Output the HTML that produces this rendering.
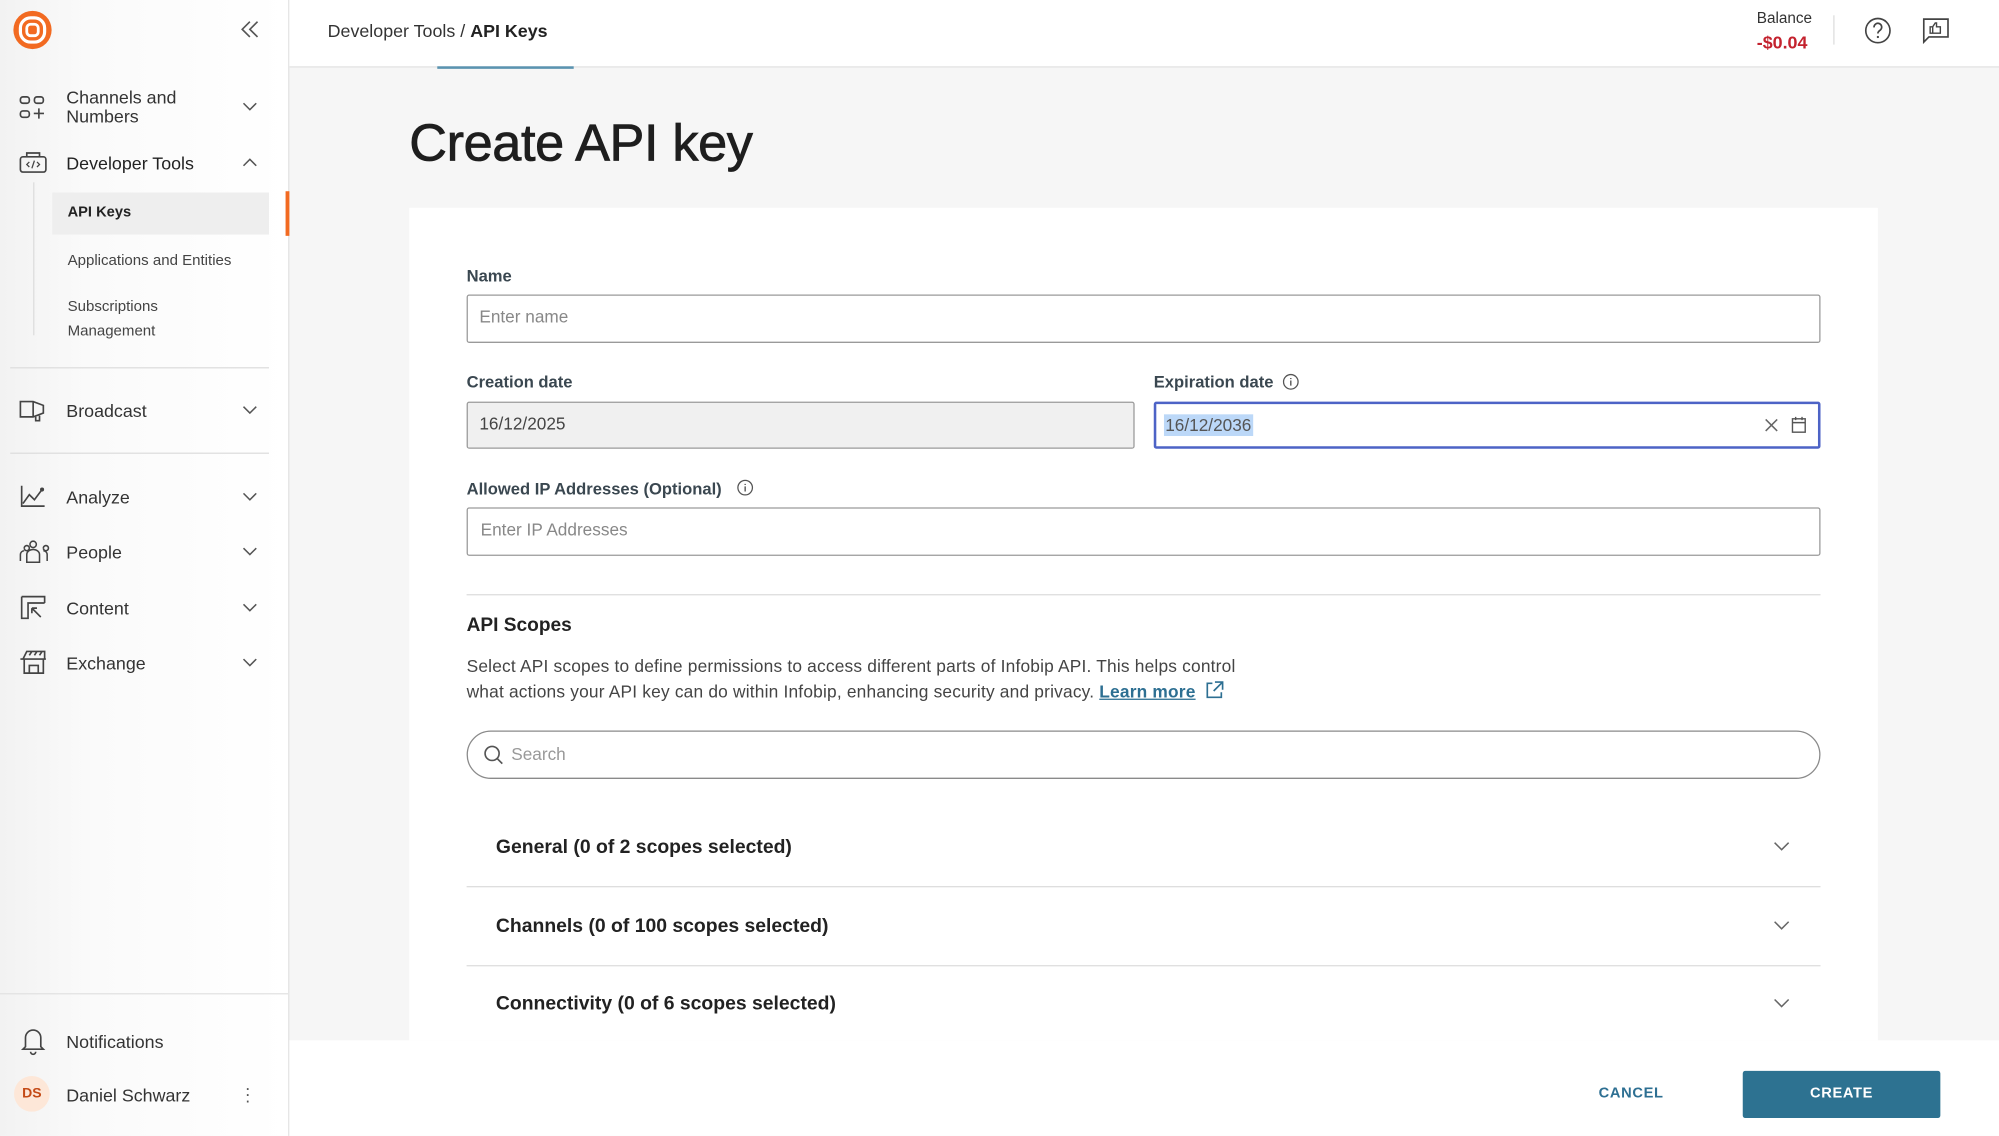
<!DOCTYPE html>
<html><head><meta charset="utf-8"><style>
html,body{margin:0;padding:0;width:1999px;height:1136px;overflow:hidden;background:#f6f6f6;font-family:"Liberation Sans",Arial,sans-serif;}
#w{position:absolute;left:0;top:0;width:1568px;height:891px;transform:scale(1.27487);transform-origin:0 0;background:#f6f6f6;}
.a{position:absolute;}
.side{left:0;top:0;width:226px;height:891px;background:linear-gradient(90deg,#f2f2f2,#fafafa 30%,#fff);border-right:1px solid #e4e4e4;}
.nav{position:absolute;left:52px;font-size:14px;color:#333;}
.chev{position:absolute;left:190px;}
.ico{position:absolute;left:15px;}
.lbl{position:absolute;left:366px;font-size:13px;font-weight:bold;color:#3a4750;}
.inp{position:absolute;left:366px;width:1060px;height:36px;border:1px solid #9a9a9a;border-radius:2px;background:#fff;box-sizing:border-box;font-size:13.5px;color:#888;line-height:34px;padding-left:9px;}
.acc{position:absolute;left:389px;font-size:15.2px;font-weight:bold;color:#222;}
.hr{position:absolute;left:366px;width:1062px;height:1px;background:#ddd;}
.ach{position:absolute;left:1391px;}
</style></head><body><div id="w">
<div class="a side"></div>
<svg class="a" style="left:10px;top:8px" width="31" height="31" viewBox="0 0 31 31"><circle cx="15.5" cy="15.5" r="15" fill="#f26a21"/><rect x="6" y="6" width="19" height="19" rx="8" fill="none" stroke="#fff" stroke-width="2.5"/><rect x="11" y="11" width="9" height="9" rx="3" fill="none" stroke="#fff" stroke-width="2.2"/></svg>
<svg class="a" style="left:188px;top:16px" width="16" height="14"><path d="M8 1L2 7l6 6M14 1L8 7l6 6" fill="none" stroke="#555" stroke-width="1.3"/></svg>
<svg class="ico" style="top:75px" width="22" height="20"><rect x="1" y="1" width="7" height="5" rx="2" fill="none" stroke="#444" stroke-width="1.3"/><rect x="12" y="1" width="7" height="5" rx="2" fill="none" stroke="#444" stroke-width="1.3"/><rect x="1" y="12" width="7" height="5" rx="2" fill="none" stroke="#444" stroke-width="1.3"/><path d="M15.5 10v8M11.5 14h8" stroke="#444" stroke-width="1.3"/></svg>
<div class="nav" style="top:69px;line-height:15px">Channels and<br>Numbers</div>
<svg class="chev" style="top:80px" width="12" height="8"><path d="M1 1l5 5 5-5" fill="none" stroke="#555" stroke-width="1.2"/></svg>
<svg class="ico" style="top:118px" width="22" height="18"><rect x="1" y="5" width="20" height="12" rx="2" fill="none" stroke="#444" stroke-width="1.3"/><path d="M6 5V2h10v3" fill="none" stroke="#444" stroke-width="1.3"/><path d="M8 9l-2 2 2 2M14 9l2 2-2 2M12 8l-2 6" fill="none" stroke="#444" stroke-width="1"/></svg>
<div class="nav" style="top:120px;color:#222">Developer Tools</div>
<svg class="chev" style="top:123px" width="12" height="8"><path d="M1 7l5-5 5 5" fill="none" stroke="#555" stroke-width="1.2"/></svg>
<div class="a" style="left:26px;top:143px;width:1px;height:120px;background:#ddd"></div>
<div class="a" style="left:41px;top:151px;width:170px;height:33px;background:#eeeeee"></div>
<div class="a" style="left:224px;top:150px;width:3px;height:35px;background:#f26a21"></div>
<div class="a" style="left:53px;top:161px;font-size:11.5px;color:#222;font-weight:bold">API Keys</div>
<div class="a" style="left:53px;top:197px;font-size:11.8px;color:#444">Applications and Entities</div>
<div class="a" style="left:53px;top:231px;font-size:11.8px;color:#444;line-height:19px">Subscriptions<br>Management</div>
<div class="a" style="left:8px;top:288px;width:203px;height:1px;background:#ddd"></div>
<svg class="ico" style="top:313px" width="22" height="18"><path d="M1 2h10l8 3v6l-8 3H1zM11 2v12M13 14v3h3v-4" fill="none" stroke="#444" stroke-width="1.3"/></svg>
<div class="nav" style="top:314px">Broadcast</div>
<svg class="chev" style="top:318px" width="12" height="8"><path d="M1 1l5 5 5-5" fill="none" stroke="#555" stroke-width="1.2"/></svg>
<div class="a" style="left:8px;top:355px;width:203px;height:1px;background:#ddd"></div>
<svg class="ico" style="top:380px" width="22" height="18"><path d="M2 1v16h18M3 15l5-7 4 4 6-8" fill="none" stroke="#444" stroke-width="1.3"/><circle cx="18" cy="4" r="1.6" fill="#444"/></svg>
<div class="nav" style="top:382px">Analyze</div>
<svg class="chev" style="top:386px" width="12" height="8"><path d="M1 1l5 5 5-5" fill="none" stroke="#555" stroke-width="1.2"/></svg>
<svg class="ico" style="top:423px" width="24" height="19"><circle cx="11" cy="4" r="2.5" fill="none" stroke="#444" stroke-width="1.2"/><path d="M6 18v-6a5 4 0 0110 0v6zM4 7a2 2 0 100-.1M1 17v-5a3 3 0 013-3M19 7a2 2 0 100-.1M22 17v-5a3 3 0 00-3-3" fill="none" stroke="#444" stroke-width="1.2"/></svg>
<div class="nav" style="top:425px">People</div>
<svg class="chev" style="top:429px" width="12" height="8"><path d="M1 1l5 5 5-5" fill="none" stroke="#555" stroke-width="1.2"/></svg>
<svg class="ico" style="top:467px" width="22" height="19"><path d="M2 1h18v5M2 1v17h5V6h13M10 10l7 7M10 10v4M10 10h4" fill="none" stroke="#444" stroke-width="1.3"/></svg>
<div class="nav" style="top:469px">Content</div>
<svg class="chev" style="top:473px" width="12" height="8"><path d="M1 1l5 5 5-5" fill="none" stroke="#555" stroke-width="1.2"/></svg>
<svg class="ico" style="top:510px" width="22" height="19"><path d="M1 7h20M3 7l3-6h14v6M4 7v11h15V7M8 18v-6h7v6M8 4l2-3M12 4l2-3M16 4l2-3" fill="none" stroke="#444" stroke-width="1.3"/></svg>
<div class="nav" style="top:512px">Exchange</div>
<svg class="chev" style="top:516px" width="12" height="8"><path d="M1 1l5 5 5-5" fill="none" stroke="#555" stroke-width="1.2"/></svg>
<div class="a" style="left:0;top:779px;width:226px;height:1px;background:#e2e2e2"></div>
<svg class="ico" style="left:16px;top:806px" width="20" height="22"><path d="M4 15V8a6 6 0 0112 0v7l2 2H2zM8 19a2 2 0 004 0" fill="none" stroke="#444" stroke-width="1.3"/></svg>
<div class="nav" style="top:809px">Notifications</div>
<div class="a" style="left:11px;top:844px;width:28px;height:28px;border-radius:50%;background:#fde7d8;color:#c44a16;font-size:11px;font-weight:bold;text-align:center;line-height:28px">DS</div>
<div class="nav" style="top:851px">Daniel Schwarz</div>
<div class="a" style="left:192px;top:851px;font-size:14px;color:#555;line-height:5px">·<br>·<br>·</div>
<!-- header -->
<div class="a" style="left:227px;top:0;width:1341px;height:52px;background:#fff;border-bottom:1px solid #e2e2e2"></div>
<div class="a" style="left:257px;top:16px;font-size:14px;color:#333">Developer Tools / <b style="color:#222">API Keys</b></div>
<div class="a" style="left:343px;top:52px;width:107px;height:2px;background:#5a93b0"></div>
<div class="a" style="left:1378px;top:7px;font-size:12px;color:#333">Balance</div>
<div class="a" style="left:1378px;top:25px;font-size:14px;color:#c4222e;font-weight:bold">-$0.04</div>
<div class="a" style="left:1438px;top:12px;width:1px;height:23px;background:#ddd"></div>
<svg class="a" style="left:1462px;top:13px" width="22" height="22"><circle cx="11" cy="11" r="9.5" fill="none" stroke="#444" stroke-width="1.3"/><path d="M8 8.5a3 3 0 115 2c-1 .8-2 1.2-2 2.8" fill="none" stroke="#444" stroke-width="1.3"/><circle cx="11" cy="16" r=".9" fill="#444"/></svg>
<svg class="a" style="left:1507px;top:13px" width="24" height="24"><path d="M2 2h19v14H6l-4 4z" fill="none" stroke="#444" stroke-width="1.3"/><path d="M7 13V8h2v5zM9 8l2-3h1v3h3v5H9" fill="none" stroke="#444" stroke-width="1.1"/></svg>
<!-- main -->
<div class="a" style="left:321px;top:89px;font-size:41px;color:#1e1e1e;letter-spacing:-0.3px;-webkit-text-stroke:0.6px #1e1e1e">Create API key</div>
<div class="a" style="left:321px;top:163px;width:1152px;height:653px;background:#fff"></div>
<div class="lbl" style="top:209px">Name</div>
<div class="inp" style="top:231px;width:1062px;height:38px">Enter name</div>
<div class="lbl" style="top:292px">Creation date</div>
<div class="inp" style="top:315px;width:524px;height:37px;background:#f0f0f0;color:#444">16/12/2025</div>
<div class="lbl" style="left:905px;top:292px">Expiration date</div>
<svg class="a" style="left:1006px;top:293px" width="13" height="13"><circle cx="6.5" cy="6.5" r="5.7" fill="none" stroke="#555" stroke-width="1"/><path d="M6.5 5.5v4M6.5 3.5v.9" stroke="#555" stroke-width="1.1"/></svg>
<div class="a" style="left:905px;top:315px;width:523px;height:37px;border:2px solid #4d63c6;box-sizing:border-box;border-radius:2px;background:#fff"></div>
<div class="a" style="left:913px;top:325px;font-size:13.5px;color:#555;background:#bcd8f8;padding:0 1px;line-height:17px">16/12/2036</div>
<svg class="a" style="left:1384px;top:328px" width="11" height="11"><path d="M1 1l9 9M10 1l-9 9" stroke="#666" stroke-width="1.2"/></svg>
<svg class="a" style="left:1405px;top:326px" width="12" height="14"><rect x="1" y="2.5" width="10" height="10.5" fill="none" stroke="#555" stroke-width="1.1"/><path d="M1 5.5h10M3.5 1v2.5M8.5 1v2.5" stroke="#555" stroke-width="1.1"/></svg>
<div class="lbl" style="top:376px">Allowed IP Addresses (Optional)</div>
<svg class="a" style="left:578px;top:376px" width="13" height="13"><circle cx="6.5" cy="6.5" r="5.7" fill="none" stroke="#555" stroke-width="1"/><path d="M6.5 5.5v4M6.5 3.5v.9" stroke="#555" stroke-width="1.1"/></svg>
<div class="inp" style="top:398px;width:1062px;height:38px;padding-left:10px">Enter IP Addresses</div>
<div class="hr" style="top:466px"></div>
<div class="a" style="left:366px;top:482px;font-size:15px;font-weight:bold;color:#222">API Scopes</div>
<div class="a" style="left:366px;top:513px;font-size:13.6px;color:#444;line-height:19.5px;white-space:nowrap;letter-spacing:0.15px">Select API scopes to define permissions to access different parts of Infobip API. This helps control<br>what actions your API key can do within Infobip, enhancing security and privacy. <span style="color:#2d6f92;font-weight:bold;text-decoration:underline">Learn more</span> <svg width="15" height="15" style="vertical-align:-2px;margin-left:3px"><path d="M6 2H2v11h11V9M8 1h6v6M14 1L7 8" fill="none" stroke="#2d6f92" stroke-width="1.3"/></svg></div>
<div class="a" style="left:366px;top:573px;width:1062px;height:38px;border:1px solid #8a8a8a;border-radius:19px;box-sizing:border-box;background:#fff"></div>
<svg class="a" style="left:379px;top:584px" width="16" height="16"><circle cx="7" cy="7" r="5.5" fill="none" stroke="#555" stroke-width="1.3"/><path d="M11 11l4 4" stroke="#555" stroke-width="1.3"/></svg>
<div class="a" style="left:401px;top:584px;font-size:13.5px;color:#999">Search</div>
<div class="acc" style="top:656px">General (0 of 2 scopes selected)</div>
<svg class="ach" style="top:660px" width="13" height="8"><path d="M1 1l5.5 5.5L12 1" fill="none" stroke="#666" stroke-width="1.2"/></svg>
<div class="hr" style="top:695px"></div>
<div class="acc" style="top:718px">Channels (0 of 100 scopes selected)</div>
<svg class="ach" style="top:722px" width="13" height="8"><path d="M1 1l5.5 5.5L12 1" fill="none" stroke="#666" stroke-width="1.2"/></svg>
<div class="hr" style="top:757px"></div>
<div class="acc" style="top:779px">Connectivity (0 of 6 scopes selected)</div>
<svg class="ach" style="top:783px" width="13" height="8"><path d="M1 1l5.5 5.5L12 1" fill="none" stroke="#666" stroke-width="1.2"/></svg>
<!-- footer -->
<div class="a" style="left:227px;top:816px;width:1341px;height:75px;background:#fff"></div>
<div class="a" style="left:1254px;top:852px;font-size:11.5px;font-weight:bold;color:#2d6f92;letter-spacing:0.5px">CANCEL</div>
<div class="a" style="left:1367px;top:840px;width:155px;height:37px;background:#2d7291;border-radius:2px;color:#fff;font-size:11.5px;font-weight:bold;text-align:center;line-height:37px;letter-spacing:0.5px">CREATE</div>
</div></body></html>
